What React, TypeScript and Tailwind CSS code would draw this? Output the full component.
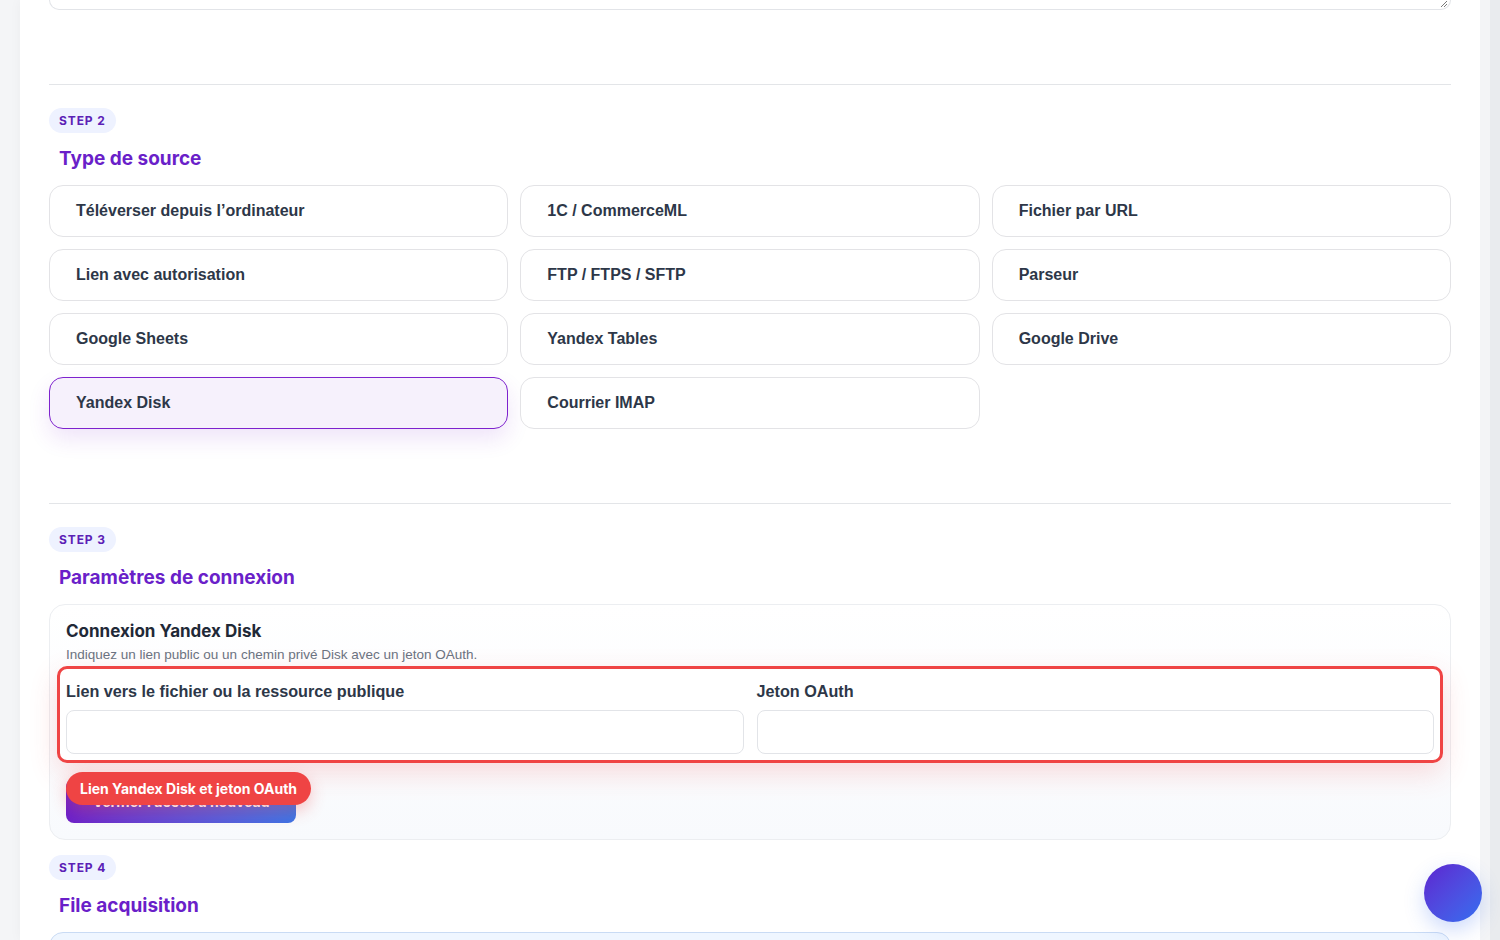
import React from "react";

const sources = [
  "Téléverser depuis l’ordinateur",
  "1C / CommerceML",
  "Fichier par URL",
  "Lien avec autorisation",
  "FTP / FTPS / SFTP",
  "Parseur",
  "Google Sheets",
  "Yandex Tables",
  "Google Drive",
  "Yandex Disk",
  "Courrier IMAP",
];

const inter = { fontFamily: "Inter, 'Noto Sans', sans-serif" };
const arial = { fontFamily: "'Liberation Sans', Arial, sans-serif" };

function Badge({ n }: { n: number }) {
  return (
    <div
      className="flex h-[25px] w-fit items-center rounded-full bg-[#eef2ff] px-[10px] text-[12px] font-bold leading-none tracking-[0.075em] text-[#5b21b6]"
      style={inter}
    >
      STEP {n}
    </div>
  );
}

function Heading({ children }: { children: React.ReactNode }) {
  return (
    <h2
      className="mt-[12px] pl-[10px] text-[19px] font-bold leading-[28px] text-[#6a1fc9]"
      style={inter}
    >
      {children}
    </h2>
  );
}

export default function App() {
  return (
    <div className="relative flex h-[940px] w-[1500px] overflow-hidden bg-[#f4f5f7]">
      <div className="w-[20px] shrink-0" />
      <main className="w-[1460px] shrink-0 bg-white px-[29px] shadow-[0_0_12px_rgba(15,23,42,0.04)]">
        {/* textarea tail */}
        <div className="relative h-[10px] rounded-b-[10px] border-x border-b border-[#e2e4e8]">
          <svg
            className="absolute right-[2px] top-[0px]"
            width="8"
            height="8"
            viewBox="0 0 8 8"
          >
            <path d="M1 7 L7 1 M4 7 L7 4" stroke="#6b6b6b" strokeWidth="0.9" />
          </svg>
        </div>

        <div className="mt-[74px] border-t border-[#e3e5e8]" />

        <div className="mt-[23px]">
          <Badge n={2} />
          <Heading>Type de source</Heading>
          <div className="mt-[12px] grid grid-cols-3 gap-x-[12px] gap-y-[12px]">
            {sources.map((s) => {
              const sel = s === "Yandex Disk";
              return (
                <button
                  key={s}
                  className={
                    sel
                      ? "flex h-[52px] items-center rounded-[14px] border border-[#7e22ce] bg-[#f6f1fc] px-[26px] text-left text-[16px] font-bold text-[#2d3748] shadow-[0_10px_22px_rgba(126,34,206,0.12)]"
                      : "flex h-[52px] items-center rounded-[14px] border border-[#e3e3e6] bg-white px-[26px] text-left text-[16px] font-bold text-[#2d3748]"
                  }
                  style={arial}
                >
                  {s}
                </button>
              );
            })}
          </div>
        </div>

        <div className="mt-[74px] border-t border-[#e3e5e8]" />

        <div className="mt-[23px]">
          <Badge n={3} />
          <Heading>Paramètres de connexion</Heading>
          <div className="mt-[12px] rounded-[16px] border border-[#eceef1] bg-gradient-to-b from-white to-[#f8fafd] px-[16px] pb-[16px] pt-[14px]">
            <div
              className="text-[17px] font-bold leading-[24px] text-[#1f2937]"
              style={inter}
            >
              Connexion Yandex Disk
            </div>
            <div
              className="mt-[3px] text-[13.5px] leading-[18px] text-[#6b7280]"
              style={arial}
            >
              Indiquez un lien public ou un chemin privé Disk avec un jeton OAuth.
            </div>
            <div className="-mx-[9px] mt-[2px] rounded-[10px] border-[3px] border-[#ef4444] bg-white px-[6px] pb-[6px] pt-[12px] shadow-[0_10px_28px_rgba(239,68,68,0.18)]">
              <div className="grid grid-cols-2 gap-x-[13px]">
                <div>
                  <div
                    className="text-[16.2px] font-bold leading-[20px] text-[#2d3748]"
                    style={arial}
                  >
                    Lien vers le fichier ou la ressource publique
                  </div>
                  <input className="mt-[9px] block h-[44px] w-full rounded-[8px] border border-[#e2e4e8] bg-white" />
                </div>
                <div>
                  <div
                    className="text-[16.2px] font-bold leading-[20px] text-[#2d3748]"
                    style={arial}
                  >
                    Jeton OAuth
                  </div>
                  <input className="mt-[9px] block h-[44px] w-full rounded-[8px] border border-[#e2e4e8] bg-white" />
                </div>
              </div>
            </div>
            <div className="relative mt-[16px]">
              <button
                className="flex h-[44px] w-[230px] items-center justify-center rounded-[8px] bg-gradient-to-r from-[#6d1fc9] to-[#3b74e6] text-[14px] font-bold text-white"
                style={inter}
              >
                Vérifier l’accès à nouveau
              </button>
              <div
                className="absolute left-0 top-[-7px] flex h-[33px] items-center rounded-full bg-[#ef4444] px-[14px] text-[14px] font-bold text-white shadow-[0_6px_16px_rgba(239,68,68,0.3)]"
                style={inter}
              >
                Lien Yandex Disk et jeton OAuth
              </div>
            </div>
          </div>
        </div>

        <div className="mt-[15px]">
          <Badge n={4} />
          <Heading>File acquisition</Heading>
          <div className="mt-[12px] h-[60px] rounded-t-[14px] border border-[#c9dbf4] bg-[#eff6ff]" />
        </div>
      </main>
      <div className="flex w-[20px] shrink-0">
        <div className="w-[10px] bg-[#f3f4f6]" />
        <div className="w-[10px] bg-[#e9ebee]" />
      </div>

      <button className="absolute left-[1424px] top-[864px] h-[58px] w-[58px] rounded-full bg-gradient-to-br from-[#5b21d0] to-[#2f6df0] shadow-[0_8px_20px_rgba(59,110,240,0.25)]" />
    </div>
  );
}
